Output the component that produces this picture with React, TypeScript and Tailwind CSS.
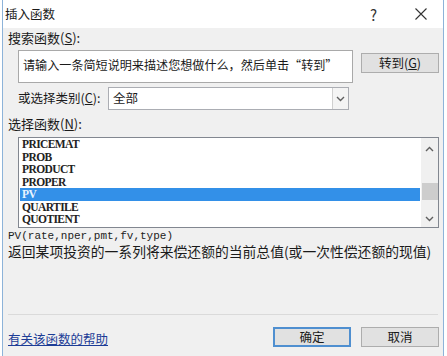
import React from 'react';

const cjk = '"Noto Sans CJK SC", "Noto Sans", sans-serif';
const serif = '"Liberation Serif", "Noto Sans CJK SC", serif';
const mono = '"Liberation Mono", monospace';

const functions = ['PRICEMAT', 'PROB', 'PRODUCT', 'PROPER', 'PV', 'QUARTILE', 'QUOTIENT'];

function Chevron({ up = false }: { up?: boolean }) {
  return (
    <svg width="9" height="6" viewBox="0 0 9 6" className="block">
      <path
        d={up ? 'M1 5 L4.5 1.5 L8 5' : 'M1 1 L4.5 4.5 L8 1'}
        fill="none"
        stroke="#606060"
        strokeWidth="1.4"
      />
    </svg>
  );
}

export default function App() {
  return (
    <div className="w-[447px] h-[356px] bg-white overflow-hidden text-[#1a1a1a]" style={{ fontFamily: cjk }}>
      <div className="ml-[2px] w-[442px] h-[356px] border-l border-r border-[#8db3d9] bg-[#f0f0f0] flex flex-col">
        {/* Title bar */}
        <div className="h-[28px] bg-white flex items-center shrink-0">
          <span className="pl-[2px] text-[12.5px] leading-none">插入函数</span>
          <span className="ml-auto text-[15px] leading-none mr-[38px] text-[#333]">?</span>
          <svg width="12" height="12" viewBox="0 0 12 12" className="mr-[16px]">
            <path d="M0.5 0.5 L11.5 11.5 M11.5 0.5 L0.5 11.5" stroke="#333" strokeWidth="1.1" />
          </svg>
        </div>

        {/* Body */}
        <div className="flex-1 flex flex-col pt-[1px]">
          <div className="pl-[5px] text-[13px] leading-[18px]">
            搜索函数(<u>S</u>):
          </div>

          <div className="flex items-start mt-[3px] pl-[15px]">
            <div className="w-[335px] h-[33px] bg-white border border-[#a9a9a9] pl-[4px] pt-[6px] text-[12.1px] leading-[16px] whitespace-nowrap overflow-hidden">
              请输入一条简短说明来描述您想做什么，然后单击“转到”
            </div>
            <button
              type="button"
              className="ml-[8px] mt-[3px] w-[78px] h-[20px] bg-[#e1e1e1] border border-[#adadad] text-[12.5px] leading-none flex items-center justify-center"
            >
              转到(<u>G</u>)
            </button>
          </div>

          <div className="flex items-center mt-[4px] pl-[15px] h-[23px]">
            <span className="w-[90px] text-[12.5px] leading-none">
              或选择类别(<u>C</u>):
            </span>
            <div className="w-[241px] h-[23px] bg-white border border-[#abadb3] flex items-center">
              <span className="pl-[4px] text-[12.5px] leading-none flex-1">全部</span>
              <div className="w-[16px] h-[21px] border-l border-[#d0d0d0] bg-[#f4f4f4] flex items-center justify-center">
                <Chevron />
              </div>
            </div>
          </div>

          <div className="pl-[5px] mt-[5px] text-[13px] leading-[18px]">
            选择函数(<u>N</u>):
          </div>

          <div className="ml-[15px] mt-[4px] w-[421px] h-[91px] bg-white border border-[#828790] flex overflow-hidden">
            <div className="flex-1 px-[1px]" style={{ fontFamily: serif }}>
              {functions.map((f) => (
                <div
                  key={f}
                  className={
                    f === 'PV'
                      ? 'h-[12.5px] leading-[12.5px] pl-[2px] text-[11.5px] font-semibold tracking-[-0.6px] bg-[#3390e8] text-[#e8f4ff]'
                      : 'h-[12.5px] leading-[12.5px] pl-[2px] text-[11.5px] font-semibold tracking-[-0.6px] text-[#222]'
                  }
                >
                  {f}
                </div>
              ))}
            </div>
            <div className="w-[17px] bg-[#f0f0f0] flex flex-col items-center">
              <div className="h-[17px] flex items-center justify-center mt-[2px]">
                <Chevron up />
              </div>
              <div className="mt-[26px] w-[16px] h-[17px] bg-[#cdcdcd]" />
              <div className="mt-auto h-[17px] flex items-center justify-center">
                <Chevron />
              </div>
            </div>
          </div>

          <div
            className="pl-[5px] mt-[2px] text-[11px] leading-[13px] text-[#222]"
            style={{ fontFamily: mono }}
          >
            PV(rate,nper,pmt,fv,type)
          </div>
          <div className="pl-[5px] mt-[1px] text-[13.8px] leading-[15px] whitespace-nowrap">
            返回某项投资的一系列将来偿还额的当前总值(或一次性偿还额的现值)
          </div>

          <div className="flex-1" />

          {/* Footer */}
          <div className="mx-[5px] border-t border-[#dadada]" />
          <div className="flex items-start pl-[5px] pt-[12px] pb-[8px] h-[41px]">
            <a href="#" className="mt-[5px] text-[12.5px] leading-[13px] text-[#1c3c96] underline">
              有关该函数的帮助
            </a>
            <button
              type="button"
              className="ml-auto w-[78px] h-[20px] bg-[#e1e1e1] border-2 border-[#4f8fd0] text-[12.5px] leading-none flex items-center justify-center"
            >
              确定
            </button>
            <button
              type="button"
              className="ml-[10px] mr-[4px] w-[78px] h-[20px] bg-[#e1e1e1] border border-[#adadad] text-[12.5px] leading-none flex items-center justify-center"
            >
              取消
            </button>
          </div>
        </div>
      </div>
    </div>
  );
}
